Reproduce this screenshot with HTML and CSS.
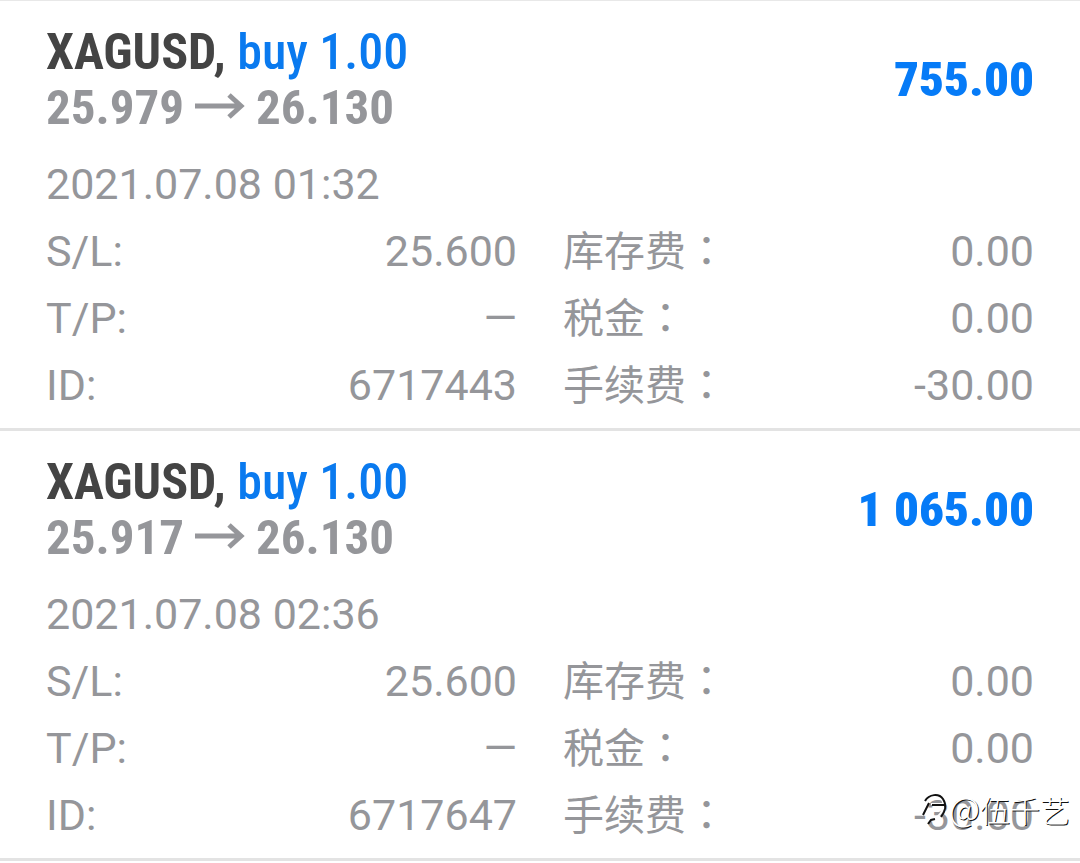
FILE: index.html
```html
<!DOCTYPE html>
<html lang="zh-CN">

<head>
  <meta charset="UTF-8" />
  <meta name="viewport" content="width=device-width, initial-scale=1">
  <title>交易历史</title>
  <link rel="stylesheet" href="styles.css">
</head>

<body>
  <main class="history">
    <article class="deal">
      <header class="deal-head">
        <div>
          <h2 class="symbol">XAGUSD, <span class="side">buy 1.00</span></h2>
          <p class="prices">
            25.979
            <svg class="arrow" viewBox="0 0 50 32" aria-label="to"><path d="M0 14H46M34 3L46 14L34 25" /></svg>
            26.130
          </p>
        </div>
        <strong class="profit">755.00</strong>
      </header>
      <time class="time" datetime="2021-07-08T01:32">2021.07.08 01:32</time>
      <div class="details">
        <dl>
          <div class="row"><dt>S/L:</dt><dd>25.600</dd></div>
          <div class="row"><dt>T/P:</dt><dd>—</dd></div>
          <div class="row"><dt>ID:</dt><dd>6717443</dd></div>
        </dl>
        <dl>
          <div class="row"><dt class="cn">库存费<span class="colon" lang="zh-TW">：</span></dt><dd>0.00</dd></div>
          <div class="row"><dt class="cn">税金<span class="colon" lang="zh-TW">：</span></dt><dd>0.00</dd></div>
          <div class="row"><dt class="cn">手续费<span class="colon" lang="zh-TW">：</span></dt><dd>-30.00</dd></div>
        </dl>
      </div>
    </article>

    <article class="deal">
      <header class="deal-head">
        <div>
          <h2 class="symbol">XAGUSD, <span class="side">buy 1.00</span></h2>
          <p class="prices">
            25.917
            <svg class="arrow" viewBox="0 0 50 32" aria-label="to"><path d="M0 14H46M34 3L46 14L34 25" /></svg>
            26.130
          </p>
        </div>
        <strong class="profit">1 065.00</strong>
      </header>
      <time class="time" datetime="2021-07-08T02:36">2021.07.08 02:36</time>
      <div class="details">
        <dl>
          <div class="row"><dt>S/L:</dt><dd>25.600</dd></div>
          <div class="row"><dt>T/P:</dt><dd>—</dd></div>
          <div class="row"><dt>ID:</dt><dd>6717647</dd></div>
        </dl>
        <dl>
          <div class="row"><dt class="cn">库存费<span class="colon" lang="zh-TW">：</span></dt><dd>0.00</dd></div>
          <div class="row"><dt class="cn">税金<span class="colon" lang="zh-TW">：</span></dt><dd>0.00</dd></div>
          <div class="row"><dt class="cn">手续费<span class="colon" lang="zh-TW">：</span></dt><dd>-30.00</dd></div>
        </dl>
      </div>
      <div class="watermark">
        <svg class="logo" viewBox="0 0 30 34">
          <path class="logo-line" d="M1 14L0 19L3 22L8 10M5 8C10 1 22 0 24 10C26 17 21 25 14 26L8 30M12 12H25" />
          <path class="logo-shade" d="M4 23L10 11M6 9C10 2 20 1 24 7C28 13 26 20 22 25M16 27L12 28L9 32M13 13H26" />
        </svg>
        <span><span class="at">@</span>伍千艺</span>
      </div>
    </article>
  </main>
</body>

</html>
```

FILE: styles.css
```css
* {
  box-sizing: border-box;
}

body {
  margin: 0;
  background: #fff;
  color: #95969a;
  font-family: Roboto, "Noto Sans CJK SC", sans-serif;
  font-size: 43px;
}

h2, p, dl, dd {
  margin: 0;
}

.history {
  border-top: 1px solid #e8e8e8;
}

.deal {
  position: relative;
  padding: 23px 46px 9px;
  border-bottom: 3px solid #e3e3e3;
}

.deal-head {
  display: flex;
  justify-content: space-between;
  align-items: center;
  margin-bottom: 15px;
  font-family: "Roboto Condensed", Roboto, sans-serif;
  font-size: 50px;
  font-weight: bold;
  line-height: 56px;
}

.symbol {
  font-size: inherit;
  color: #444;
}

.side {
  font-weight: 500;
  color: #0a7aef;
}

.prices {
  display: flex;
  align-items: center;
  gap: 11px;
}

.arrow {
  width: 50px;
  height: 32px;
  fill: none;
  stroke: currentColor;
  stroke-width: 5;
}

.prices, .profit {
  font-size: 49px;
}

.profit {
  color: #067bf7;
}

.time {
  display: block;
  line-height: 67px;
}

.details {
  display: grid;
  grid-template-columns: 1fr 1fr;
  gap: 46px;
}

.row {
  display: flex;
  justify-content: space-between;
  height: 67px;
  line-height: 67px;
}

.cn {
  font-size: 41px;
  line-height: 61px;
}

.colon {
  font-family: "Noto Sans CJK TC", sans-serif;
}

.watermark {
  position: absolute;
  right: 10px;
  bottom: 31px;
  display: flex;
  align-items: center;
  font-family: "Noto Sans CJK SC", sans-serif;
  font-size: 30px;
  font-weight: 300;
  line-height: 36px;
  color: #fff;
  text-shadow: 1px 1px 0 #111;
}

.at {
  font-size: 34px;
}

.logo {
  width: 30px;
  height: 34px;
  fill: none;
}

.logo-shade {
  stroke: #111;
  stroke-width: 2;
}

.logo-line {
  stroke: #fff;
  stroke-width: 2;
}
```
